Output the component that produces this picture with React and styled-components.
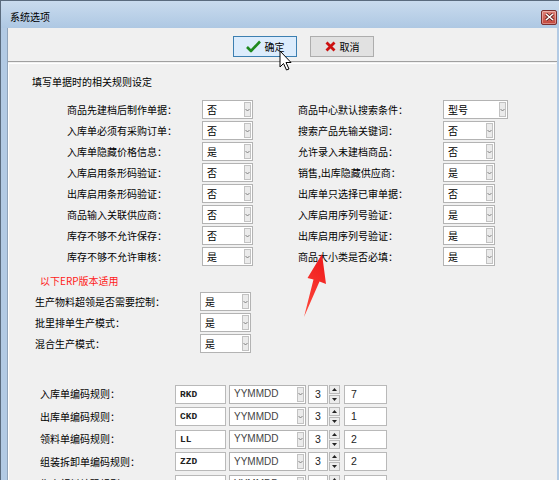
import React from "react";
import styled, { createGlobalStyle } from "styled-components";

const CN = '"Noto Sans CJK SC", "Noto Sans", sans-serif';

const GlobalStyle = createGlobalStyle`
  * {
    box-sizing: border-box;
  }
  body {
    margin: 0;
    background: #f0f0f0;
  }
`;

const Window = styled.div`
  position: relative;
  width: 559px;
  height: 480px;
  overflow: hidden;
  display: flex;
  flex-direction: column;
  background: #b2cae4;
  border-top: 1px solid #5a6b7e;
  border-left: 1px solid #5a6b7e;
  font-family: ${CN};
  font-size: 10px;
  color: #000;
`;

const TitleBar = styled.div`
  height: 27px;
  flex: none;
  display: flex;
  align-items: center;
  justify-content: space-between;
  padding: 5px 2px 0 9px;
  background: linear-gradient(#c9dbee, #aec8e3);
  line-height: 14px;
`;

const CloseButton = styled.div`
  width: 16px;
  height: 15px;
  border: 1px solid #7b2d2d;
  border-radius: 2px;
  background: linear-gradient(#e0837a, #c3453a);
  display: flex;
  align-items: center;
  justify-content: center;
  box-shadow: inset 0 0 0 1px rgba(255, 255, 255, 0.35);
`;

const Body = styled.div`
  flex: 1;
  margin: 0 2px 0 6px;
  background: #f0f0f0;
  border-left: 1px solid #8fa3ba;
  display: flex;
  flex-direction: column;
`;

const Toolbar = styled.div`
  height: 34px;
  flex: none;
  display: flex;
  gap: 13px;
  padding: 8px 0 0 225px;
  border-bottom: 1px solid #a0a0a0;
`;

const Button = styled.div`
  width: 64px;
  height: 21px;
  display: flex;
  align-items: center;
  justify-content: center;
  gap: 4px;
  border: 1px solid ${(p) => (p.$active ? "#3c7fb1" : "#adadad")};
  background: ${(p) => (p.$active ? "#dcecfc" : "#e1e1e1")};
  line-height: 14px;
`;

const Panel = styled.div`
  flex: 1;
  margin: 1px 1px 0 0;
  border-top: 1px solid #fff;
  border-left: 1px solid #fff;
  padding-top: 11px;
`;

const Heading = styled.div`
  height: 14px;
  line-height: 14px;
  padding-left: 23px;
`;

const Columns = styled.div`
  display: flex;
  margin-top: 10px;
  padding-left: 58px;
`;

const Column = styled.div`
  display: flex;
  flex-direction: column;
  margin-left: ${(p) => p.$offset || 0}px;
`;

const Row = styled.div`
  display: flex;
  align-items: center;
  height: ${(p) => p.$h || 21}px;
  padding-left: ${(p) => p.$indent || 0}px;
`;

const Label = styled.div`
  width: ${(p) => p.$w}px;
  flex: none;
  line-height: 14px;
  white-space: nowrap;
`;

const SelectBox = styled.div`
  width: ${(p) => p.$w}px;
  height: 19px;
  flex: none;
  display: flex;
  align-items: center;
  border: 1px solid #b3b3b3;
  background: #fff;
  padding: 1px 1px 1px 4px;
  margin-right: ${(p) => p.$mr || 0}px;
  font-family: ${(p) => (p.$latin ? '"Liberation Sans", sans-serif' : CN)};
  font-size: 10px;
  color: ${(p) => (p.$latin ? "#444" : "#000")};
`;

const SelectText = styled.span`
  flex: 1;
  line-height: 14px;
`;

const ArrowBox = styled.span`
  width: 7px;
  height: 15px;
  border: 1px solid #c2c2c2;
  background: #ebebeb;
  display: flex;
  align-items: center;
  justify-content: center;
`;

const Note = styled.div`
  margin: 7px 0 0 31px;
  height: 14px;
  line-height: 14px;
  color: #ff1a1a;
`;

const ErpBlock = styled.div`
  margin-top: 3px;
`;

const CodeBlock = styled.div`
  margin-top: 29px;
`;

const Field = styled.div`
  width: ${(p) => p.$w}px;
  height: 19px;
  flex: none;
  border: 1px solid #b9b9b9;
  background: #fff;
  padding-left: ${(p) => (p.$code ? 4 : 6)}px;
  margin-right: ${(p) => p.$mr || 0}px;
  line-height: 17px;
  font-family: ${(p) =>
    p.$code ? '"Liberation Mono", monospace' : '"Liberation Sans", sans-serif'};
  font-weight: ${(p) => (p.$code ? "bold" : "normal")};
  font-size: ${(p) => (p.$code ? "9.5px" : "10.5px")};
  color: #222;
`;

const Spinner = styled.div`
  width: 11px;
  height: 19px;
  flex: none;
  margin-right: 4px;
  display: flex;
  flex-direction: column;
  gap: 1px;
`;

const SpinHalf = styled.div`
  flex: 1;
  border: 1px solid #b9b9b9;
  background: #ececec;
  display: flex;
  align-items: center;
  justify-content: center;
`;

const Overlay = styled.svg`
  position: absolute;
  left: 0;
  top: 0;
  pointer-events: none;
`;

const Chevron = () => (
  <svg width="5" height="4" viewBox="0 0 5 4">
    <path d="M0.5 1 L2.5 3 L4.5 1" fill="none" stroke="#777" strokeWidth="0.9" />
  </svg>
);

const Select = ({ value, w = 52, latin, mr }) => (
  <SelectBox $w={w} $latin={latin} $mr={mr}>
    <SelectText>{value}</SelectText>
    <ArrowBox>
      <Chevron />
    </ArrowBox>
  </SelectBox>
);

const leftRules = [
  ["商品先建档后制作单据：", "否"],
  ["入库单必须有采购订单：", "否"],
  ["入库单隐藏价格信息：", "是"],
  ["入库启用条形码验证：", "否"],
  ["出库启用条形码验证：", "否"],
  ["商品输入关联供应商：", "否"],
  ["库存不够不允许保存：", "否"],
  ["库存不够不允许审核：", "是"],
];

const rightRules = [
  ["商品中心默认搜索条件：", "型号", 65],
  ["搜索产品先输关键词：", "否"],
  ["允许录入未建档商品：", "否"],
  ["销售,出库隐藏供应商：", "是"],
  ["出库单只选择已审单据：", "否"],
  ["入库启用序列号验证：", "是"],
  ["出库启用序列号验证：", "是"],
  ["商品大小类是否必填：", "是"],
];

const erpRules = [
  ["生产物料超领是否需要控制：", "是"],
  ["批里排单生产模式：", "是"],
  ["混合生产模式：", "是"],
];

const codeRules = [
  ["入库单编码规则：", "RKD", "7"],
  ["出库单编码规则：", "CKD", "1"],
  ["领料单编码规则：", "LL", "2"],
  ["组装拆卸单编码规则：", "ZZD", "2"],
  ["生产领料编码规则：", "SCL", "2"],
];

export default function App() {
  return (
    <Window>
      <GlobalStyle />
      <TitleBar>
        <span>系统选项</span>
        <CloseButton>
          <svg width="9" height="8" viewBox="0 0 9 8">
            <path d="M1 1 L8 7 M8 1 L1 7" stroke="#5a1a1a" strokeWidth="3" />
            <path d="M1 1 L8 7 M8 1 L1 7" stroke="#fff" strokeWidth="1.6" />
          </svg>
        </CloseButton>
      </TitleBar>

      <Body>
        <Toolbar>
          <Button $active>
            <svg width="15" height="13" viewBox="0 0 15 13">
              <path d="M1 7 L5 11 L14 1.5" fill="none" stroke="#1f8a1f" strokeWidth="2.6" strokeLinejoin="round" />
            </svg>
            <span>确定</span>
          </Button>
          <Button>
            <svg width="11" height="11" viewBox="0 0 11 11">
              <path d="M1.5 1.5 L9.5 9.5 M9.5 1.5 L1.5 9.5" stroke="#cc1010" strokeWidth="2.8" />
            </svg>
            <span>取消</span>
          </Button>
        </Toolbar>

        <Panel>
          <Heading>填写单据时的相关规则设定</Heading>

          <Columns>
            <Column>
              {leftRules.map(([label, value]) => (
                <Row key={label}>
                  <Label $w={135}>{label}</Label>
                  <Select value={value} w={51} />
                </Row>
              ))}
            </Column>
            <Column $offset={45}>
              {rightRules.map(([label, value, w]) => (
                <Row key={label}>
                  <Label $w={145}>{label}</Label>
                  <Select value={value} w={w || 52} />
                </Row>
              ))}
            </Column>
          </Columns>

          <Note>以下ERP版本适用</Note>

          <ErpBlock>
            {erpRules.map(([label, value]) => (
              <Row key={label} $indent={26}>
                <Label $w={165}>{label}</Label>
                <Select value={value} w={51} />
              </Row>
            ))}
          </ErpBlock>

          <CodeBlock>
            {codeRules.map(([label, prefix, serial]) => (
              <Row key={label} $indent={31} $h={22.5}>
                <Label $w={135}>{label}</Label>
                <Field $w={51} $mr={3} $code>
                  {prefix}
                </Field>
                <Select value="YYMMDD" w={77} latin mr={2} />
                <Field $w={20} $mr={1}>
                  3
                </Field>
                <Spinner>
                  <SpinHalf>
                    <svg width="5" height="3" viewBox="0 0 5 3">
                      <path d="M0 3 L2.5 0 L5 3 Z" fill="#222" />
                    </svg>
                  </SpinHalf>
                  <SpinHalf>
                    <svg width="5" height="3" viewBox="0 0 5 3">
                      <path d="M0 0 L2.5 3 L5 0 Z" fill="#222" />
                    </svg>
                  </SpinHalf>
                </Spinner>
                <Field $w={43}>{serial}</Field>
              </Row>
            ))}
          </CodeBlock>
        </Panel>
      </Body>

      <Overlay width="559" height="480" viewBox="0 0 559 480">
        <defs>
          <linearGradient id="arrowFill" x1="0" y1="1" x2="0.3" y2="0">
            <stop offset="0" stopColor="#ff4a3d" />
            <stop offset="1" stopColor="#f01f1f" />
          </linearGradient>
        </defs>
        <path
          d="M321 253 L325 283 L318.5 280.5 L303 316 L312.5 278.5 L306.5 277 Z"
          fill="url(#arrowFill)"
        />
        <path
          d="M279 50 L279 66 L282.5 62.5 L285.5 69 L288 68 L285 61.5 L290 61.5 Z"
          fill="#fff"
          stroke="#000"
          strokeWidth="1"
          strokeLinejoin="round"
        />
      </Overlay>
    </Window>
  );
}
